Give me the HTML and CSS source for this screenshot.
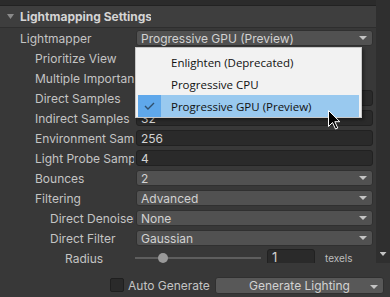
FILE: index.html
```html
<!DOCTYPE html>
<html lang="en">
<head>
    <meta name="viewport" content="width=device-width, initial-scale=1.0">
    <title>Lightmapping Settings</title>
    <link rel="stylesheet" href="styles.css">
</head>
<body>
    <div class="main">
        <div class="content">
            <div class="top-strip"></div>
            <div class="header">
                <span class="fold"></span>
                <span class="title">Lightmapping Settings</span>
            </div>
            <div class="rows">
                <div class="row"><span class="label l0">Lightmapper</span><div class="dropdown">Progressive GPU (Preview)</div></div>
                <div class="row"><span class="label l1">Prioritize View</span><div class="toggle"></div></div>
                <div class="row"><span class="label l1">Multiple Importance Sampling</span><div class="toggle"></div></div>
                <div class="row"><span class="label l1">Direct Samples</span><div class="field">32</div></div>
                <div class="row"><span class="label l1">Indirect Samples</span><div class="field">32</div></div>
                <div class="row"><span class="label l1">Environment Samples</span><div class="field">256</div></div>
                <div class="row"><span class="label l1">Light Probe Sample Multiplier</span><div class="field">4</div></div>
                <div class="row"><span class="label l1">Bounces</span><div class="dropdown">2</div></div>
                <div class="row"><span class="label l1">Filtering</span><div class="dropdown">Advanced</div></div>
                <div class="row"><span class="label l2">Direct Denoiser</span><div class="dropdown">None</div></div>
                <div class="row"><span class="label l2">Direct Filter</span><div class="dropdown">Gaussian</div></div>
                <div class="row">
                    <span class="label l3">Radius</span>
                    <div class="slider"><span class="knob"></span></div>
                    <div class="field small">1</div>
                    <span class="unit">texels</span>
                </div>
            </div>
        </div>
        <div class="scrollbar"><span class="scroll-arrow"></span></div>
    </div>
    <div class="bottom-bar">
        <span class="checkbox"></span>
        <span class="check-label">Auto Generate</span>
        <div class="button">Generate Lighting</div>
    </div>

    <div class="popup">
        <div class="item"><span class="gutter"></span><span>Enlighten (Deprecated)</span></div>
        <div class="item"><span class="gutter"></span><span>Progressive CPU</span></div>
        <div class="item selected">
            <span class="gutter">
                <svg width="11" height="8" viewBox="0 0 11 8"><path d="M1 4 L4 7 L10 1" fill="none" stroke="#2f4f6c" stroke-width="1.4"/></svg>
            </span>
            <span>Progressive GPU (Preview)</span>
        </div>
    </div>

    <svg class="cursor" width="13" height="20" viewBox="0 0 13 20">
        <path d="M0.5 0.5 L0.5 16.5 L4.5 12.5 L7.5 19 L9.8 18 L6.8 11.7 L11.8 11.7 Z" fill="#000" stroke="#fff" stroke-width="1"/>
    </svg>
</body>
</html>
```

FILE: styles.css
```css
body {
    margin: 0;
    width: 390px;
    height: 297px;
    overflow: hidden;
    background: #383838;
    font-family: Inter, "Noto Sans", sans-serif;
    font-size: 12px;
    color: #c4c4c4;
}
.main {
    display: flex;
    height: 263px;
    overflow: hidden;
}
.content {
    flex: 1;
}
.top-strip {
    height: 5px;
    background: #2b2b2b;
    border-bottom: 1px solid #222;
}
.header {
    height: 21px;
    background: #3e3e3e;
    border-bottom: 1px solid #2e2e2e;
    display: flex;
    align-items: center;
    padding-left: 7px;
}
.fold {
    width: 7px;
    height: 5px;
    background: #8a8a8a;
    clip-path: polygon(0 0, 100% 0, 50% 100%);
}
.title {
    margin-left: 6px;
    width: 131px;
    overflow: hidden;
    white-space: nowrap;
    font-weight: bold;
    color: #d4d4d4;
}
.rows {
    padding-top: 2px;
    display: flex;
    flex-direction: column;
    gap: 4px;
}
.row {
    display: flex;
    align-items: center;
    height: 16px;
}
.label {
    box-sizing: border-box;
    width: 134px;
    margin-right: 2px;
    overflow: hidden;
    white-space: nowrap;
}
.l0 { padding-left: 20px; }
.l1 { padding-left: 35px; }
.l2 { padding-left: 50px; }
.l3 { padding-left: 65px; }
.dropdown, .field {
    box-sizing: border-box;
    width: 237px;
    height: 16px;
    border-radius: 3px;
    padding-left: 4px;
    display: flex;
    align-items: center;
    color: #d2d2d2;
}
.dropdown {
    background: #515151;
    border: 1px solid #303030;
    justify-content: space-between;
    padding-right: 5px;
}
.dropdown::after {
    content: "";
    width: 8px;
    height: 4px;
    background: #c4c4c4;
    clip-path: polygon(0 0, 100% 0, 50% 100%);
}
.field {
    background: #2a2a2a;
    border: 1px solid #212121;
}
.toggle {
    width: 14px;
    height: 14px;
    background: #2a2a2a;
}
.slider {
    width: 126px;
    height: 2px;
    margin-left: -1px;
    background: #5e5e5e;
    display: flex;
    align-items: center;
}
.knob {
    width: 10px;
    height: 10px;
    margin-left: 23px;
    border-radius: 50%;
    background: #999;
}
.field.small {
    width: 48px;
    margin-left: 6px;
    margin-top: -2px;
    height: 17px;
    font-size: 13px;
}
.unit {
    margin-left: 10px;
    font-size: 10px;
    color: #bcbcbc;
}
.scrollbar {
    width: 14px;
    background: #2f2f2f;
    display: flex;
    flex-direction: column;
    justify-content: flex-end;
    align-items: center;
    padding-bottom: 7px;
    box-sizing: border-box;
}
.scroll-arrow {
    width: 7px;
    height: 4px;
    background: #c4c4c4;
    clip-path: polygon(0 0, 100% 0, 50% 100%);
}
.bottom-bar {
    height: 34px;
    display: flex;
    align-items: flex-start;
    padding: 14px 6px 0 110px;
}
.checkbox {
    box-sizing: border-box;
    width: 14px;
    height: 14px;
    margin-top: 1px;
    background: #2a2a2a;
    border: 1px solid #1f1f1f;
    border-radius: 2px;
}
.check-label {
    margin-left: 4px;
    margin-top: 1px;
    line-height: 15px;
}
.button {
    box-sizing: border-box;
    margin-left: auto;
    width: 169px;
    height: 17px;
    background: #585858;
    border: 1px solid #303030;
    border-radius: 3px;
    display: flex;
    align-items: center;
    justify-content: center;
    position: relative;
    color: #d2d2d2;
}
.button::after {
    content: "";
    position: absolute;
    right: 5px;
    top: 7px;
    width: 8px;
    height: 4px;
    background: #c4c4c4;
    clip-path: polygon(0 0, 100% 0, 50% 100%);
}
.popup {
    position: absolute;
    left: 135px;
    top: 47px;
    box-sizing: border-box;
    width: 227px;
    height: 71px;
    padding: 3px 2px 1px 2px;
    background: #f2f2f2;
    border: 1px solid #c8c8c8;
    box-shadow: 2px 2px 3px rgba(0, 0, 0, 0.35);
    font-family: "Open Sans", "Noto Sans", sans-serif;
    font-size: 11.5px;
    color: #111;
}
.item {
    height: 22px;
    display: flex;
    align-items: center;
}
.gutter {
    width: 23px;
    height: 100%;
    margin-right: 10px;
    display: flex;
    align-items: center;
    justify-content: center;
}
.item.selected {
    background: #99c9ef;
}
.item.selected .gutter {
    background: #5fa8eb;
}
.cursor {
    position: absolute;
    left: 328px;
    top: 110px;
}
```
